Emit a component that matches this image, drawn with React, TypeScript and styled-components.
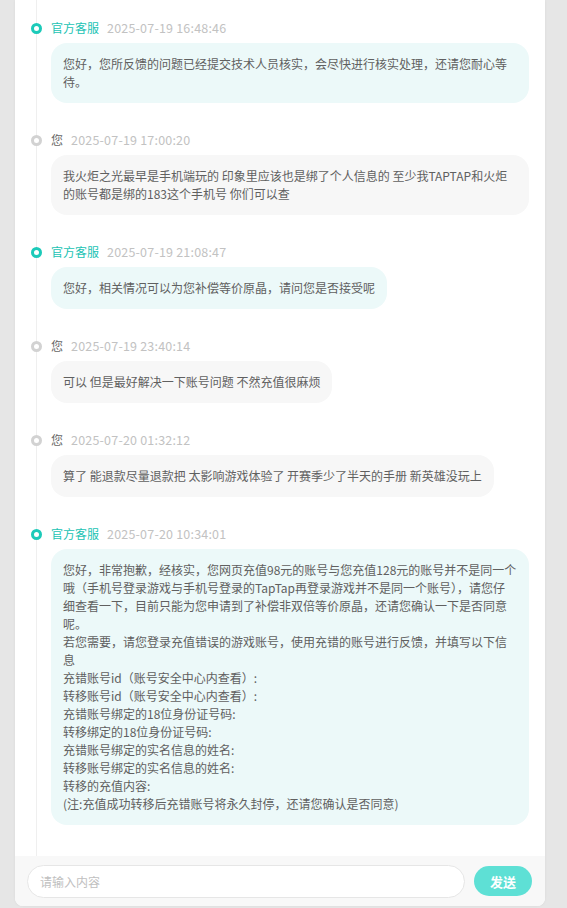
import React, { useState } from 'react';
import styled, { createGlobalStyle } from 'styled-components';

type Sender = 'service' | 'user';

interface Message {
  id: number;
  sender: Sender;
  time: string;
  lines: string[];
}

const GlobalStyle = createGlobalStyle`
  html, body {
    margin: 0;
    padding: 0;
    background: #e6e6e6;
  }
  body {
    font-family: "Noto Sans CJK SC", "Noto Sans", "Liberation Sans", sans-serif;
    -webkit-font-smoothing: antialiased;
  }
  * { box-sizing: border-box; }
`;

// Layout
const Page = styled.div`
  display: flex;
  padding: 0 22px 2px 15px;
  height: 908px;
`;

const Card = styled.div`
  flex: 1;
  display: flex;
  flex-direction: column;
  background: #fff;
  border-radius: 0 0 8px 8px;
  box-shadow: 0 0 3px rgba(0, 0, 0, 0.06);
  overflow: hidden;
`;

const ScrollArea = styled.div`
  flex: 1;
  overflow: hidden;
  padding: 0 16px 0 21px;
`;

const Rail = styled.div`
  height: 100%;
  padding: 19px 0 0 14px;
  border-left: 1px solid #efefef;
`;

const Item = styled.div`
  margin-bottom: 28px;
`;

const Header = styled.div`
  position: relative;
  display: flex;
  align-items: center;
  gap: 8px;
  height: 18px;
  line-height: 18px;
  font-size: 12px;
  margin-bottom: 6px;
`;

const Dot = styled.span<{ $service: boolean }>`
  position: absolute;
  left: -20px;
  top: 4px;
  width: 11px;
  height: 11px;
  border-radius: 50%;
  background: #fff;
  border: 3px solid ${p => (p.$service ? '#1ccab9' : '#d2d2d2')};
`;

const Name = styled.span<{ $service: boolean }>`
  color: ${p => (p.$service ? '#22c3b4' : '#666')};
`;

const Time = styled.span`
  color: #c2c2c2;
  font-size: 12.5px;
  letter-spacing: 0.2px;
`;

const Bubble = styled.div<{ $service: boolean }>`
  width: fit-content;
  max-width: 100%;
  padding: 12px 12px;
  border-radius: 16px;
  background: ${p => (p.$service ? '#ecf9f9' : '#f7f7f7')};
  color: #606060;
  font-size: 12px;
  line-height: 18px;
  word-break: break-all;
`;

const Line = styled.div``;

// Input bar
const InputBar = styled.div`
  height: 50px;
  flex-shrink: 0;
  display: flex;
  align-items: center;
  gap: 9px;
  padding: 0 13px 0 12px;
  background: #f8f8f8;
`;

const TextInput = styled.input`
  flex: 1;
  height: 33px;
  padding: 0 12px;
  border: 1px solid #e6e6e6;
  border-radius: 17px;
  background: #fff;
  font-family: inherit;
  font-size: 12px;
  color: #555;
  outline: none;

  &::placeholder {
    color: #c0c0c0;
  }
`;

const SendButton = styled.button`
  width: 58px;
  height: 30px;
  border: none;
  border-radius: 15px;
  background: #5ee0d5;
  color: #fff;
  font-family: inherit;
  font-size: 13px;
  font-weight: 700;
  cursor: pointer;
`;

const messages: Message[] = [
  {
    id: 1,
    sender: 'service',
    time: '2025-07-19 16:48:46',
    lines: ['您好，您所反馈的问题已经提交技术人员核实，会尽快进行核实处理，还请您耐心等待。'],
  },
  {
    id: 2,
    sender: 'user',
    time: '2025-07-19 17:00:20',
    lines: ['我火炬之光最早是手机端玩的 印象里应该也是绑了个人信息的 至少我TAPTAP和火炬的账号都是绑的183这个手机号 你们可以查'],
  },
  {
    id: 3,
    sender: 'service',
    time: '2025-07-19 21:08:47',
    lines: ['您好，相关情况可以为您补偿等价原晶，请问您是否接受呢'],
  },
  {
    id: 4,
    sender: 'user',
    time: '2025-07-19 23:40:14',
    lines: ['可以 但是最好解决一下账号问题 不然充值很麻烦'],
  },
  {
    id: 5,
    sender: 'user',
    time: '2025-07-20 01:32:12',
    lines: ['算了 能退款尽量退款把 太影响游戏体验了 开赛季少了半天的手册 新英雄没玩上'],
  },
  {
    id: 6,
    sender: 'service',
    time: '2025-07-20 10:34:01',
    lines: [
      '您好，非常抱歉，经核实，您网页充值98元的账号与您充值128元的账号并不是同一个哦（手机号登录游戏与手机号登录的TapTap再登录游戏并不是同一个账号），请您仔细查看一下，目前只能为您申请到了补偿非双倍等价原晶，还请您确认一下是否同意呢。',
      '若您需要，请您登录充值错误的游戏账号，使用充错的账号进行反馈，并填写以下信息',
      '充错账号id（账号安全中心内查看）:',
      '转移账号id（账号安全中心内查看）:',
      '充错账号绑定的18位身份证号码:',
      '转移绑定的18位身份证号码:',
      '充错账号绑定的实名信息的姓名:',
      '转移账号绑定的实名信息的姓名:',
      '转移的充值内容:',
      '(注:充值成功转移后充错账号将永久封停，还请您确认是否同意)',
    ],
  },
];

export default function App() {
  const [text, setText] = useState('');

  return (
    <>
      <GlobalStyle />
      <Page>
        <Card>
          <ScrollArea>
            <Rail>
              {messages.map(m => {
                const service = m.sender === 'service';
                return (
                  <Item key={m.id}>
                    <Header>
                      <Dot $service={service} />
                      <Name $service={service}>{service ? '官方客服' : '您'}</Name>
                      <Time>{m.time}</Time>
                    </Header>
                    <Bubble $service={service}>
                      {m.lines.map((l, i) => (
                        <Line key={i}>{l}</Line>
                      ))}
                    </Bubble>
                  </Item>
                );
              })}
            </Rail>
          </ScrollArea>
          <InputBar>
            <TextInput
              placeholder="请输入内容"
              value={text}
              onChange={e => setText(e.target.value)}
            />
            <SendButton>发送</SendButton>
          </InputBar>
        </Card>
      </Page>
    </>
  );
}
